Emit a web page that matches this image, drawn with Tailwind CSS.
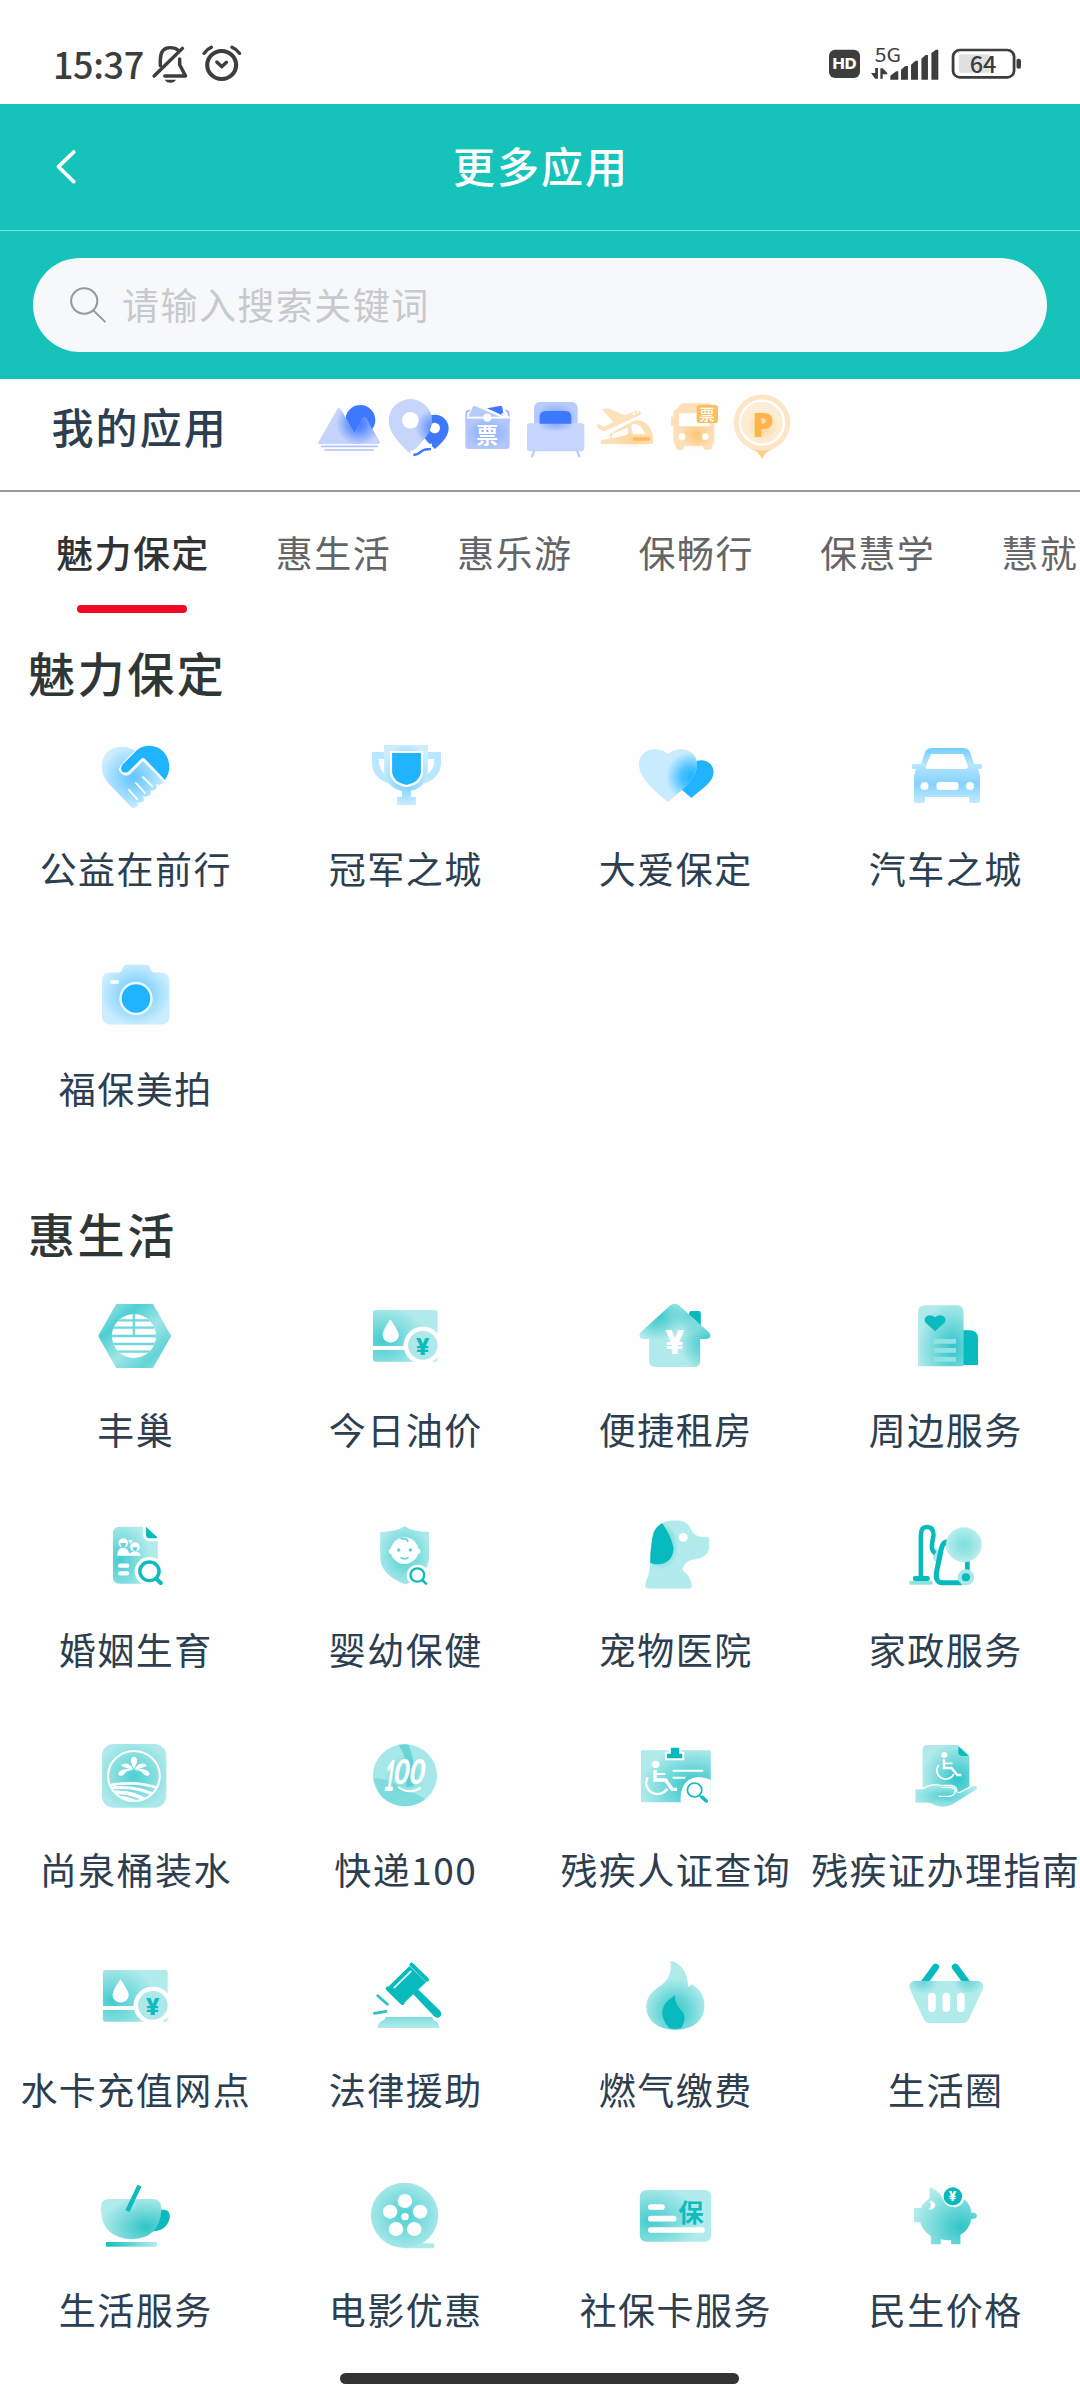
<!DOCTYPE html>
<html lang="zh-CN">
<head>
<meta charset="utf-8">
<title>更多应用</title>
<script src="https://cdn.jsdelivr.net/npm/@tailwindcss/browser@4"></script>
</head>
<body class="bg-[#fefefe]">
<!-- shared gradients and symbols -->
<svg class="absolute w-0 h-0" aria-hidden="true">
  <defs>
    <radialGradient id="tBL" cx=".15" cy=".6" r=".7"><stop offset="0" stop-color="#45cccf"/><stop offset="1" stop-color="#b2ebec"/></radialGradient>
    <radialGradient id="tC" cx=".5" cy=".5" r=".55"><stop offset="0" stop-color="#4fcfd2"/><stop offset="1" stop-color="#ade9ea"/></radialGradient>
    <radialGradient id="tBR" cx=".75" cy=".7" r=".75"><stop offset="0" stop-color="#2fc5c8"/><stop offset="1" stop-color="#b0eaeb"/></radialGradient>
    <linearGradient id="tHex" x1="0" y1="0" x2="1" y2="1"><stop offset="0" stop-color="#a5e6e8"/><stop offset=".28" stop-color="#4fcfd3"/><stop offset=".55" stop-color="#9fe5e7"/><stop offset=".8" stop-color="#62d4d7"/><stop offset="1" stop-color="#9be4e6"/></linearGradient>
    <linearGradient id="tH" x1="0" x2="1"><stop offset="0" stop-color="#16bcbe"/><stop offset="1" stop-color="#b6ecec"/></linearGradient>
    <linearGradient id="tV" x1="0" y1="0" x2="0" y2="1"><stop offset="0" stop-color="#7cdcde"/><stop offset="1" stop-color="#b6ecec"/></linearGradient>
    <radialGradient id="glowB"><stop offset="0" stop-color="#3e78ff"/><stop offset=".35" stop-color="#3e78ff" stop-opacity=".75"/><stop offset="1" stop-color="#3e78ff" stop-opacity="0"/></radialGradient>
    <radialGradient id="glowS"><stop offset="0" stop-color="#20b4ff"/><stop offset=".4" stop-color="#20b4ff" stop-opacity=".75"/><stop offset="1" stop-color="#20b4ff" stop-opacity="0"/></radialGradient>
    <radialGradient id="glowO"><stop offset="0" stop-color="#fdb64a" stop-opacity=".6"/><stop offset="1" stop-color="#fdb64a" stop-opacity="0"/></radialGradient>
    <radialGradient id="glowT"><stop offset="0" stop-color="#07babd" stop-opacity=".7"/><stop offset=".5" stop-color="#07babd" stop-opacity=".4"/><stop offset="1" stop-color="#07babd" stop-opacity="0"/></radialGradient>
    <radialGradient id="blueC" cx=".5" cy=".5" r=".52"><stop offset="0" stop-color="#62c6ff"/><stop offset=".45" stop-color="#8ed6ff"/><stop offset="1" stop-color="#cbedff"/></radialGradient>
    <linearGradient id="car" x1="0" y1="0" x2="0" y2="1"><stop offset="0" stop-color="#74cdff"/><stop offset=".3" stop-color="#b5e5ff"/><stop offset=".65" stop-color="#86d3ff"/><stop offset="1" stop-color="#c4eaff"/></linearGradient>
  </defs>
  <symbol id="watercard" viewBox="1060 288 232.3 240" preserveAspectRatio="none">
    <rect x="1083" y="330" width="188" height="155" rx="8" fill="url(#tBL)"/>
    <path d="M1134 358Q1158 395 1158 405A23 22 0 1 1 1111 405Q1111 392 1134 358Z" fill="#fff"/>
    <rect x="1081" y="438" width="100" height="12" fill="#fff"/>
    <circle cx="1228" cy="436" r="56" fill="#fff"/>
    <circle cx="1228" cy="436" r="43" fill="#aee8ea"/>
    <text x="1228" y="464" text-anchor="middle" font-size="70" font-weight="800" fill="#10bbbd" font-family="Inter">¥</text>
  </symbol>
</svg>

<main class="relative w-[1080px] h-[2400px] overflow-hidden bg-[#fefefe] font-['Noto_Sans_CJK_SC',sans-serif]">
  <!-- status bar -->
  <div class="h-[104px] flex items-start justify-between pl-[53px] pr-[58px] pt-[43px] text-[#3d3d3d]">
    <div class="flex items-start">
      <span class="w-[98px] text-[36px] leading-[40px] tracking-[-0.4px] font-medium whitespace-nowrap">15:37</span>
      <svg class="w-[38px] h-[42px]" viewBox="440 130 110 126" preserveAspectRatio="none" fill="none" stroke="#3d3d3d" stroke-width="10" stroke-linecap="round" stroke-linejoin="round"><path d="M467 198V180Q468 144 495 144Q511 144 519 152M523 178V195L540 229H480M449 229L531 146"/><path d="M480 240H512Q508 249 496 249Q484 249 480 240Z" fill="#3d3d3d" stroke="none"/></svg>
      <svg class="w-[42px] h-[42px] ml-[12px]" viewBox="583 130 122 126" preserveAspectRatio="none" fill="none" stroke="#3d3d3d" stroke-width="10" stroke-linecap="round" stroke-linejoin="round"><circle cx="643" cy="196" r="42" stroke-width="12"/><path d="M629 187L643 201L657 188M592 161Q600 149 613 143M673 143Q687 149 695 161"/></svg>
    </div>
    <div class="flex">
      <svg class="w-[31px] h-[42px]" viewBox="838 130 90 126" preserveAspectRatio="none"><rect x="838" y="150" width="90" height="85" rx="18" fill="#3d3d3d"/><text x="848" y="208" textLength="70" lengthAdjust="spacingAndGlyphs" font-size="45" font-weight="800" font-family="Inter" fill="#fff">HD</text></svg>
      <svg class="w-[69px] h-[42px] ml-[10px] overflow-visible" viewBox="958 130 200 126" preserveAspectRatio="none" fill="#3d3d3d"><text x="972" y="186" textLength="76" lengthAdjust="spacingAndGlyphs" font-size="58" font-family="Noto Sans CJK SC">5G</text><path d="M973 205h8v32h-8l-12-17h12zM988 237v-31h7l13 14v4h-13v13zM1017 240V228L1034 215H1040V240ZM1048 240V210L1060 199H1068V240ZM1077 240V195L1090 183H1097V240ZM1107 240V177L1119 166H1126V240ZM1136 240V160L1149 150H1156V240Z"/></svg>
      <svg class="w-[71px] h-[42px] ml-[12px]" viewBox="1194 130 206 126" preserveAspectRatio="none"><rect x="1217" y="164" width="89" height="55" rx="6" fill="#e0e0e0"/><rect x="1200" y="151" width="177" height="82" rx="20" fill="none" stroke="#3d3d3d" stroke-width="8"/><rect x="1384" y="177" width="13" height="30" rx="6" fill="#3d3d3d"/><text x="1287" y="219" text-anchor="middle" font-size="68" font-weight="500" font-family="Noto Sans CJK SC" fill="#3d3d3d">64</text></svg>
    </div>
  </div>

  <!-- header -->
  <header class="h-[275px] bg-[#15c3bb]">
    <div class="h-[127px] border-b border-[#7fe0dc] grid grid-cols-[1fr_auto_1fr] items-center">
      <svg class="ml-[54px] w-[26px] h-[40px]" viewBox="157 440 75 120" preserveAspectRatio="none" fill="none" stroke="#fff" stroke-width="11" stroke-linecap="round" stroke-linejoin="round"><path d="M214 455L170 499L214 544"/></svg>
      <h1 class="text-[42px] leading-[60px] tracking-[2px] font-medium text-white -mt-[5px] pl-[2px]">更多应用</h1>
    </div>
    <div class="mx-[33px] mt-[27px] h-[94px] rounded-full bg-[#f7f8fa] flex items-center pl-[35px]">
      <svg class="w-[40px] h-[40px]" viewBox="196 853 116 120" preserveAspectRatio="none" fill="none" stroke="#999" stroke-width="6" stroke-linecap="round"><circle cx="243" cy="901" r="38"/><path d="M270 930L303 963"/></svg>
      <span class="ml-[14px] -mt-[3px] text-[37px] tracking-[1.45px] leading-[50px] text-[#c8c9cc]">请输入搜索关键词</span>
    </div>
  </header>

  <!-- my apps -->
  <section class="h-[113px] border-b-2 border-[#999] flex pl-[51.5px]">
    <h2 class="w-[263.8px] pt-[17px] text-[42px] leading-[60px] tracking-[2.1px] font-medium text-[#2c3e50]">我的应用</h2>
    <div class="flex pt-[6px]">
      <svg class="w-[68.67px] h-[84px]" viewBox="46 0 206 252"><circle cx="182" cy="105" r="45" fill="#3e78ff"/><clipPath id="mt"><path d="M56 172L113 72Q118 66 123 72L164 144L190 99Q195 93 200 99L240 173Q240 177 236 177H60Q54 177 56 172Z"/></clipPath><g clip-path="url(#mt)"><rect x="50" y="60" width="200" height="120" fill="#c4d4fb"/><circle cx="176" cy="115" r="66" fill="url(#glowB)"/></g><path d="M190 99Q195 93 200 99L240 173" fill="none" stroke="#3a6ef2" stroke-opacity=".35" stroke-width="2"/><path d="M66 184H233M76 195H221" stroke="#adc3f9" stroke-width="5" stroke-linecap="round"/></svg>
      <svg class="w-[68.67px] h-[84px]" viewBox="252 0 206 252"><path d="M405 192C395 182 364 160 364 130A41 41 0 0 1 446 130C446 160 415 182 405 192Z" fill="#3e78ff"/><circle cx="404" cy="129" r="16" fill="#fff"/><clipPath id="pn"><path d="M331 206C315 190 266 150 266 107A65 65 0 0 1 396 107C396 150 347 190 331 206Z"/></clipPath><g clip-path="url(#pn)"><rect x="260" y="40" width="140" height="170" fill="#c6d6fb"/><circle cx="402" cy="128" r="56" fill="url(#glowB)" opacity=".8"/></g><circle cx="331" cy="106" r="25" fill="#fff"/><path d="M332 209Q350 212 362 200Q372 190 396 190" transform="translate(0 -9)" fill="none" stroke="#fff" stroke-width="10"/><path d="M340 210Q354 209 363 200Q371 192 393 192" fill="none" stroke="#3e78ff" stroke-width="7"/></svg>
      <svg class="w-[68.67px] h-[84px]" viewBox="458 0 206 252"><path d="M560 70L602 62Q608 62 609 92Z" fill="#3e78ff"/><path d="M502 99L517 66Q520 61 526 64L606 98Z" fill="#b7cbfb"/><path d="M498 110V86Q498 77 508 76M625 110V86Q625 77 615 76" fill="none" stroke="#9db8fa" stroke-width="5"/><path d="M495 98H628V183Q628 192 618 192H505Q495 192 495 183Z" fill="#b2c8fb"/><path d="M495 98H628V183Q628 192 618 192H505Q495 192 495 183Z" fill="url(#glowB)" opacity=".35"/><path d="M500 98H628L604 86" fill="none" stroke="#fff" stroke-width="5"/><circle cx="561" cy="98" r="12" fill="#fff"/><text x="561" y="175" text-anchor="middle" font-size="66" font-weight="700" fill="#fff">票</text></svg>
      <svg class="w-[68.67px] h-[84px]" viewBox="664 0 206 252"><rect x="703" y="51" width="131" height="90" rx="18" fill="#b8ccfb"/><ellipse cx="768" cy="98" rx="62" ry="45" fill="url(#glowB)" opacity=".5"/><path d="M682 123Q682 115 690 115H846Q854 115 854 123V189Q854 199 844 199H692Q682 199 682 189Z" fill="#c5d5fb"/><path d="M720 116V96Q720 78 738 78H797Q815 78 815 96V116Z" fill="#3e78ff"/><ellipse cx="768" cy="118" rx="55" ry="22" fill="url(#glowB)" opacity=".4"/><path d="M703 199L697 214M833 199L839 214" stroke="#b8ccfb" stroke-width="7" stroke-linecap="round"/></svg>
      <svg class="w-[68.67px] h-[84px]" viewBox="870 0 206 252"><path d="M902 177V166Q960 128 1005 106Q1034 102 1050 130Q1062 150 1060 170Q1060 177 1054 177Z" fill="#fddfb7"/><ellipse cx="1000" cy="165" rx="60" ry="25" fill="url(#glowO)" opacity=".5"/><path d="M906 166Q906 157 930 151V160ZM937 147L983 128Q988 145 978 151L935 160ZM996 118Q1022 112 1036 148H1000Q992 140 996 118Z" fill="#fff"/><path d="M906 74Q906 68 925 69L975 89L1003 77Q1022 73 1025 84Q1024 92 1010 97L912 141Q900 141 886 119L897 116L911 124L938 111Z" fill="#fde2be" stroke="#fff" stroke-width="3"/><circle cx="1002" cy="86" r="4" fill="#fff"/><circle cx="1013" cy="82" r="3" fill="#fff"/><rect x="998" y="157" width="53" height="10" rx="5" fill="#fdb95a"/></svg>
      <svg class="w-[68.67px] h-[84px]" viewBox="1076 0 206 252"><path d="M1119 80Q1122 72 1134 68Q1138 56 1150 55H1225Q1242 58 1242 75V165Q1242 176 1236 180V188Q1234 194 1226 194H1216Q1209 193 1208 182H1152Q1152 193 1144 194H1134Q1126 193 1126 182Q1119 176 1119 165V122H1112V95H1119Z" fill="#fde0b8"/><ellipse cx="1190" cy="150" rx="52" ry="44" fill="url(#glowO)"/><rect x="1136" y="84" width="92" height="40" rx="4" fill="#fff"/><circle cx="1145" cy="155" r="10" fill="#fff"/><circle cx="1215" cy="155" r="10" fill="#fff"/><rect x="1189" y="60" width="64" height="54" rx="8" fill="#fdbd60"/><text x="1220" y="104" text-anchor="middle" font-size="46" font-weight="500" fill="#fff">票</text></svg>
      <svg class="w-[68.67px] h-[84px]" viewBox="1282 0 206 252"><path d="M1387 222Q1378 198 1350 190A85 85 0 1 1 1424 190Q1396 198 1387 222Z" fill="#fde6c6"/><path d="M1387 222Q1378 198 1350 190Q1387 204 1424 190Q1396 198 1387 222Z" fill="#fdcd8a"/><circle cx="1387" cy="113" r="66" fill="#feedd5" stroke="#fff" stroke-width="7"/><ellipse cx="1390" cy="125" rx="50" ry="46" fill="url(#glowO)" opacity=".7"/><text x="1390" y="156" text-anchor="middle" font-size="102" font-weight="800" font-family="Open Sans" fill="#fdb54b">P</text></svg>
    </div>
  </section>

  <!-- category tabs -->
  <nav class="h-[150px] flex gap-[66px] pl-[56px] pt-[30px] text-[37px] leading-[60px] tracking-[1.45px] text-[#646566] whitespace-nowrap">
    <div class="flex flex-col items-center text-[#323233] font-medium"><span>魅力保定</span><i class="mt-[23px] mr-[2px] w-[110px] h-[8px] shrink-0 rounded-full bg-[#ee0a24]"></i></div>
    <span>惠生活</span><span>惠乐游</span><span>保畅行</span><span>保慧学</span><span>慧就</span>
  </nav>

  <section class="h-[561px]">
    <h2 class="h-[93px] pl-[28px] text-[47px] leading-[60px] tracking-[2.6px] font-medium text-[#2f3636]">魅力保定</h2>
    <div class="grid grid-cols-4 auto-rows-[220px] text-[37px] leading-[60px] tracking-[1.45px] text-[#2c3e50] whitespace-nowrap [&_span]:pl-[1.5px]">
      <div class="flex flex-col items-center gap-[23px]">
        <svg class="w-[80px] h-[80px]" viewBox="0 0 80 80"><path d="M37 14C27 9 12 12 8 24C4 36 10 46 18 53L36 72Q40 75 43 70L42 67Q47 69 49 65L48 61Q54 63 56 58L55 55Q61 57 62 51L61 49Q66 51 69 47L48 26L34 40Q27 42 24 35Q23 31 40 16Z" fill="url(#blueC)"/><path d="M42 15C52 7 66 11 71 20C76 29 75 38 70 45L50 24Q48 22 46 24L33 37Q27 39 26 34Q26 31 28 29Z" fill="#20b4ff"/><path d="M48 42L57 51M41 48L50 58M34 55L42 64" stroke="#fff" stroke-width="1.8" stroke-linecap="round"/></svg>
        <span>公益在前行</span></div>
      <div class="flex flex-col items-center gap-[23px]">
        <svg class="w-[80px] h-[80px]" viewBox="0 0 80 80"><path d="M21 20.500H10.500V29Q12 41 25 45M62 20.500H72.500V29Q71 41 58 45" fill="none" stroke="#b9e7ff" stroke-width="7"/><path d="M19 10H63V38Q60 53 46 56V62H51V70H32V62H37V56Q22 53 19 38Z" fill="url(#blueC)"/><path d="M26 17H57V38Q55 49 41.500 51Q28 49 26 38Z" fill="#20b4ff" stroke="#fff" stroke-width="2.200"/></svg>
        <span>冠军之城</span></div>
      <div class="flex flex-col items-center gap-[23px]">
        <svg class="w-[80px] h-[80px]" viewBox="0 0 80 80"><path d="M56.500 63C46 54 36 46 36 36C36 25 48 21 57 28C66 22 78.500 26 78.500 37C78.500 48 66 54 56.500 63Z" fill="#20b4ff"/><clipPath id="ht"><path d="M33 67C20 56 4 44 4 29C4 16 20 9 33 19C46 9 62 16 62 29C62 44 46 56 33 67Z"/></clipPath><g clip-path="url(#ht)"><rect width="80" height="80" fill="#c8ebff"/><circle cx="56" cy="42" r="25" fill="url(#glowS)"/></g></svg>
        <span>大爱保定</span></div>
      <div class="flex flex-col items-center gap-[23px]">
        <svg class="w-[80px] h-[80px]" viewBox="0 0 80 80"><path d="M9 34H8Q7 34 7 32V30Q7 29 9 29H16L20 17Q22 13 27 13H58Q63 13 65 17L69 29H76Q77 29 77 31V32Q77 34 75 34H73Q75 38 75 45V66Q75 68 73 68H66Q64 68 64 66V62H20V66Q20 68 18 68H11Q9 68 9 66V45Q9 38 11 34Z" fill="url(#car)"/><path d="M26 19H58L63 31Q63 34 60 34H23Q20 34 21 31Z" fill="#fff"/><circle cx="19.500" cy="51" r="4" fill="#fff"/><circle cx="65" cy="51" r="4" fill="#fff"/><rect x="31.500" y="47" width="22" height="8" rx="3" fill="#fff"/></svg>
        <span>汽车之城</span></div>
      <div class="flex flex-col items-center gap-[23px]">
        <svg class="w-[80px] h-[80px]" viewBox="0 0 80 80"><path d="M15 17.500H24Q27 17 28 12Q29 9.500 32 9.500H51Q54 9.500 55 12Q56 17 59 17.500H66Q74.500 18 74.500 26V61Q74.500 69.500 66 69.500H16Q7 69.500 7 61V26Q7 18 15 17.500Z" fill="url(#blueC)"/><circle cx="41" cy="43.500" r="15.500" fill="#20b4ff" stroke="#e8f8ff" stroke-width="2.500"/><rect x="15" y="25" width="9" height="4" rx="2" fill="#f4fbff"/></svg>
        <span>福保美拍</span></div>
    </div>
  </section>

  <section>
    <h2 class="h-[93px] pl-[28px] text-[47px] leading-[60px] tracking-[2.6px] font-medium text-[#2f3636]">惠生活</h2>
    <div class="grid grid-cols-4 auto-rows-[220px] text-[37px] leading-[60px] tracking-[1.45px] text-[#2c3e50] whitespace-nowrap [&_span]:pl-[1.5px]">
      <div class="flex flex-col items-center gap-[23px]">
        <svg class="w-[80px] h-[80px]" viewBox="275.9 288 232.3 240" preserveAspectRatio="none"><path d="M287 408L339 314H443L495 408L443 502H339Z" fill="url(#tHex)" stroke="url(#tHex)" stroke-width="4" stroke-linejoin="round"/><clipPath id="gl"><ellipse cx="389" cy="408" rx="64" ry="66"/></clipPath><g clip-path="url(#gl)"><rect x="320" y="340" width="140" height="140" fill="#fff"/><path d="M320 361H460M320 383H460M320 408H460M320 432H460M320 455H460M389 340V408" stroke="#6fd8da" stroke-width="7"/></g></svg>
        <span>丰巢</span></div>
      <div class="flex flex-col items-center gap-[23px]"><svg class="w-[80px] h-[80px]"><use href="#watercard"/></svg><span>今日油价</span></div>
      <div class="flex flex-col items-center gap-[23px]">
        <svg class="w-[80px] h-[80px]" viewBox="275.9 288 232.3 240" preserveAspectRatio="none"><rect x="433" y="333" width="34" height="52" rx="7" fill="#07babd"/><clipPath id="hs"><path d="M291 398Q284 416 300 417H317V484Q317 501 334 501H448Q465 501 465 484V417H484Q501 414 492 398L405 317Q391 305 377 317Z"/></clipPath><g clip-path="url(#hs)"><rect x="280" y="300" width="230" height="210" fill="#b0eaeb"/><circle cx="340" cy="345" r="75" fill="url(#glowT)"/><circle cx="490" cy="430" r="85" fill="url(#glowT)"/><circle cx="430" cy="345" r="55" fill="url(#glowT)" opacity=".6"/></g><text x="392" y="462" text-anchor="middle" font-size="98" font-weight="800" fill="#fff" font-family="Inter">¥</text></svg>
        <span>便捷租房</span></div>
      <div class="flex flex-col items-center gap-[23px]">
        <svg class="w-[80px] h-[80px]" viewBox="1060 288 232.3 240" preserveAspectRatio="none"><path d="M1228 391H1250Q1272 393 1272 415V495H1228Z" fill="#07babd"/><path d="M1098 499V336Q1098 316 1118 316H1210Q1230 316 1230 336V499Z" fill="url(#tBR)"/><path d="M1147 394L1121 369C1108 352 1130 336 1147 352C1164 336 1187 352 1174 369Z" fill="#0bbbbe"/><path d="M1144 424H1208M1144 451H1208M1144 478H1208" stroke="#92e2e4" stroke-width="14"/></svg>
        <span>周边服务</span></div>

      <div class="flex flex-col items-center gap-[23px]">
        <svg class="w-[80px] h-[80px]" viewBox="275.9 948 232.3 240" preserveAspectRatio="none"><path d="M328 1000Q328 980 348 980H415V1005Q418 1024 440 1024H458V1151H348Q328 1151 328 1131Z" fill="url(#tBL)"/><path d="M424 980L456 1011V1015H434Q424 1014 424 1005Z" fill="#07babd"/><g fill="#fff"><circle cx="358" cy="1029" r="14"/><path d="M340 1067Q341 1043 358 1043Q374 1043 376 1067Z"/><circle cx="392" cy="1041" r="14"/><path d="M372 1067Q376 1055 392 1055Q408 1055 409 1067Z"/><path d="M379 1031L373 1023Q375 1017 379 1021Q383 1017 385 1023Z"/></g><path d="M350 1029H366Q366 1043 358 1043Q350 1043 350 1029ZM385 1042H399Q399 1053 392 1053Q385 1053 385 1042Z" fill="#6ad6d9"/><path d="M349 1097H369M349 1120H369" stroke="#fff" stroke-width="13" stroke-linecap="round"/><circle cx="434" cy="1114" r="43" fill="#fefefe"/><circle cx="434" cy="1114" r="28" fill="none" stroke="#10bbbd" stroke-width="10"/><path d="M456 1138L467 1149" stroke="#10bbbd" stroke-width="12" stroke-linecap="round"/></svg>
        <span>婚姻生育</span></div>
      <div class="flex flex-col items-center gap-[23px]">
        <svg class="w-[80px] h-[80px]" viewBox="1060 948 232.3 240" preserveAspectRatio="none"><path d="M1175 979Q1200 996 1246 996V1070Q1246 1125 1178 1153Q1104 1125 1104 1070V996Q1150 996 1175 979Z" fill="url(#tC)"/><g fill="#fff"><circle cx="1175" cy="1052" r="40"/><circle cx="1138" cy="1054" r="9"/><circle cx="1212" cy="1054" r="9"/></g><g fill="none" stroke="#5bd2d5" stroke-width="5" stroke-linecap="round"><path d="M1165 1073Q1175 1080 1185 1073M1165 1016Q1185 1014 1184 1024"/></g><circle cx="1158" cy="1050" r="5" fill="#5bd2d5"/><circle cx="1192" cy="1050" r="5" fill="#5bd2d5"/><circle cx="1213" cy="1126" r="32" fill="#fefefe"/><circle cx="1212" cy="1125" r="20" fill="none" stroke="#10bbbd" stroke-width="7"/><path d="M1228 1142L1237 1151" stroke="#10bbbd" stroke-width="8" stroke-linecap="round"/></svg>
        <span>婴幼保健</span></div>
      <div class="flex flex-col items-center gap-[23px]">
        <svg class="w-[80px] h-[80px]" viewBox="275.9 948 232.3 240" preserveAspectRatio="none"><clipPath id="dg"><path d="M355 970Q370 961 395 961Q427 962 437 985Q445 1012 480 1012H491V1045Q487 1072 455 1077Q420 1080 414 1107Q418 1118 428 1124Q442 1145 441 1160Q440 1166 432 1166H315Q304 1165 306 1155Q308 1140 314 1128Q320 1110 320 1088V1060L328 1000Q335 978 355 970Z"/></clipPath><g clip-path="url(#dg)"><rect x="300" y="955" width="200" height="215" fill="#b2ebec"/><ellipse cx="352" cy="1038" rx="50" ry="72" fill="url(#glowT)"/></g><path d="M355 970Q380 1005 388 1045Q385 1092 340 1093Q330 1093 320 1088Q322 1030 330 1000Q338 978 355 970Z" fill="#07babd"/><circle cx="416" cy="1012" r="13" fill="#fff"/></svg>
        <span>宠物医院</span></div>
      <div class="flex flex-col items-center gap-[23px]">
        <svg class="w-[80px] h-[80px]" viewBox="1060 948 232.3 240" preserveAspectRatio="none"><ellipse cx="1149" cy="1064" rx="8" ry="20" fill="#aee9ea"/><path d="M1106 1130V1005Q1106 981 1124 981Q1143 981 1143 1005Q1138 1030 1138 1043Q1139 1055 1148 1060" fill="none" stroke="#07babd" stroke-width="13"/><rect x="1083" y="1128" width="49" height="15" rx="6" fill="#07babd"/><rect x="1073" y="1143" width="67" height="11" fill="#8fe1e3"/><rect x="1234" y="1084" width="14" height="26" fill="#07babd"/><path d="M1190 1024Q1169 1024 1165 1048L1151 1120Q1149 1147 1166 1148H1225" fill="none" stroke="#07babd" stroke-width="15"/><circle cx="1231" cy="1034" r="52" fill="#b8eeee"/><circle cx="1231" cy="1034" r="52" fill="url(#glowT)" opacity=".45"/><circle cx="1237" cy="1132" r="24" fill="#a8e8e9"/><circle cx="1237" cy="1132" r="12" fill="#07babd"/></svg>
        <span>家政服务</span></div>

      <div class="flex flex-col items-center gap-[23px]">
        <svg class="w-[80px] h-[80px]" viewBox="275.9 108 232.3 240" preserveAspectRatio="none"><rect x="296" y="132" width="187" height="191" rx="35" fill="url(#tC)"/><circle cx="389" cy="228" r="75" fill="none" stroke="#fff" stroke-width="6"/><g fill="#fff"><path d="M389 208Q378 186 380 180Q381 171 389 170Q397 171 398 180Q400 186 389 208Z"/><path d="M386 210Q370 206 351 197Q360 187 374 193Q383 198 386 210ZM392 210Q408 206 427 197Q418 187 404 193Q395 198 392 210ZM384 211Q368 211 359 224Q350 230 344 225Q342 215 354 210Q368 204 384 211ZM394 211Q410 211 419 224Q428 230 434 225Q436 215 424 210Q410 204 394 211Z"/></g><clipPath id="wt"><circle cx="389" cy="228" r="74"/></clipPath><g clip-path="url(#wt)" fill="none" stroke="#fff"><path d="M310 258Q390 238 470 268" stroke-width="8"/><path d="M310 266Q390 252 460 290" stroke-width="9"/><path d="M310 280Q375 268 430 304" stroke-width="11"/><path d="M320 294Q365 286 400 308" stroke-width="8"/></g></svg>
        <span>尚泉桶装水</span></div>
      <div class="flex flex-col items-center gap-[23px]">
        <svg class="w-[80px] h-[80px]" viewBox="1060 108 232.3 240" preserveAspectRatio="none"><clipPath id="hd"><circle cx="1176" cy="226" r="93"/></clipPath><g clip-path="url(#hd)"><rect x="1080" y="130" width="195" height="195" fill="#a6e7e9"/><path d="M1155 130Q1190 180 1180 260H1200Q1210 190 1185 130Z" fill="#4ecfd2" opacity=".7"/><path d="M1083 235Q1130 232 1160 265L1176 270Q1225 285 1250 310L1176 325L1110 300Z" fill="#4ecfd2" opacity=".45"/><circle cx="1176" cy="226" r="60" fill="url(#glowT)" opacity=".45"/></g><text transform="translate(1111 272) skewX(-8)" textLength="32" lengthAdjust="spacingAndGlyphs" font-size="128" font-weight="900" font-family="Lato" fill="#fff">1</text><text transform="translate(1140 252) skewX(-10)" textLength="90" lengthAdjust="spacingAndGlyphs" font-size="102" font-weight="900" font-family="Lato" fill="#fff">00</text><path d="M1156 261Q1190 286 1222 263" fill="none" stroke="#fff" stroke-width="6"/></svg>
        <span>快递100</span></div>
      <div class="flex flex-col items-center gap-[23px]">
        <svg class="w-[80px] h-[80px]" viewBox="275.9 108 232.3 240" preserveAspectRatio="none"><rect x="293" y="151" width="203" height="156" rx="4" fill="url(#tBR)"/><path d="M380 143H404V161H413V175H369V161H380Z" fill="#07babd" stroke="#fff" stroke-width="12" paint-order="stroke"/><circle cx="336" cy="193" r="11" fill="#fff"/><g fill="none" stroke="#fff"><path d="M334 210V240H365L384 268H398" stroke-width="10"/><path d="M337 222H364M385 212H474M385 233H422" stroke-width="6"/><path d="M313 232A32 32 0 1 0 370 266" stroke-width="7"/></g><path d="M496 240V312H409Q403 240 455 231Q478 231 496 240Z" fill="#fefefe"/><circle cx="449" cy="270" r="21" fill="none" stroke="#10bbbd" stroke-width="5"/><path d="M464 287L470 293" stroke="#10bbbd" stroke-width="5"/><path d="M471 292L483 303" stroke="#10bbbd" stroke-width="10" stroke-linecap="round"/></svg>
        <span>残疾人证查询</span></div>
      <div class="flex flex-col items-center gap-[23px]">
        <svg class="w-[80px] h-[80px]" viewBox="1060 108 232.3 240" preserveAspectRatio="none"><path d="M1111 150Q1111 135 1126 135H1213L1243 162Q1247 166 1247 172V262L1215 280L1165 256L1111 262Z" fill="url(#tBR)"/><path d="M1215 139V160Q1217 168 1225 168H1244Z" fill="#07babd"/><circle cx="1174" cy="165" r="9" fill="#fff"/><g fill="none" stroke="#fff"><path d="M1173 178V204H1195L1212 225H1224" stroke-width="7"/><path d="M1175 190H1198" stroke-width="5"/><path d="M1158 195A26 26 0 1 0 1202 222" stroke-width="5"/></g><path d="M1090 268H1112Q1140 250 1165 258H1195Q1212 262 1208 276L1218 280L1256 259Q1272 255 1268 268L1195 315Q1175 324 1150 317Q1130 305 1115 308H1090Z" fill="url(#tC)" stroke="#fff" stroke-width="7" paint-order="stroke"/><path d="M1158 289H1190Q1207 285 1206 272Q1204 262 1190 262H1165" fill="none" stroke="#fff" stroke-width="4"/></svg>
        <span>残疾证办理指南</span></div>

      <div class="flex flex-col items-center gap-[23px]"><svg class="w-[80px] h-[80px]"><use href="#watercard"/></svg><span>水卡充值网点</span></div>
      <div class="flex flex-col items-center gap-[23px]">
        <svg class="w-[80px] h-[80px]" viewBox="1060 768 232.3 240" preserveAspectRatio="none"><path d="M1120 951H1255Q1256 960 1264 963Q1275 968 1276 984H1096Q1098 968 1110 962Q1119 960 1120 951Z" fill="url(#tV)"/><g fill="#07babd"><path d="M1189 798L1238 846L1174 908L1127 861Z"/><path d="M1196 878L1211 865L1278 932Q1286 944 1276 952Q1268 956 1260 948Z"/></g><path d="M1195 794L1240 839M1126 866L1169 909" stroke="#07babd" stroke-width="12" stroke-linecap="round"/><path d="M1145 863L1193 814" stroke="#e6f8f8" stroke-width="5" stroke-linecap="round"/><path d="M1097 887L1125 913M1087 940L1121 934" stroke="#2cc3c5" stroke-width="8" stroke-linecap="round"/></svg>
        <span>法律援助</span></div>
      <div class="flex flex-col items-center gap-[23px]">
        <svg class="w-[80px] h-[80px]" viewBox="275.9 768 232.3 240" preserveAspectRatio="none"><clipPath id="fl"><path d="M379 782Q428 795 430 860Q437 860 440 852Q478 875 478 918Q474 986 393 990Q312 985 308 920Q308 885 345 860Q386 835 379 782Z"/></clipPath><g clip-path="url(#fl)"><rect x="300" y="775" width="190" height="220" fill="#b0eaeb"/><ellipse cx="392" cy="935" rx="92" ry="100" fill="url(#glowT)"/></g><path d="M392 886Q390 912 416 938Q426 955 410 985Q393 988 376 985Q358 965 355 942Q354 908 392 886Z" fill="#07babd"/></svg>
        <span>燃气缴费</span></div>
      <div class="flex flex-col items-center gap-[23px]">
        <svg class="w-[80px] h-[80px]" viewBox="1060 768 232.3 240" preserveAspectRatio="none"><path d="M1149 801L1113 852M1206 801L1242 852" stroke="#07babd" stroke-width="20" stroke-linecap="round"/><clipPath id="bk"><path d="M1087 842H1273Q1292 848 1286 868L1245 958Q1240 970 1228 970H1132Q1120 970 1115 958L1074 868Q1068 848 1087 842Z"/></clipPath><g clip-path="url(#bk)"><rect x="1060" y="840" width="240" height="140" fill="#b2ebec"/><ellipse cx="1112" cy="842" rx="45" ry="40" fill="url(#glowT)" opacity=".65"/><ellipse cx="1244" cy="842" rx="45" ry="40" fill="url(#glowT)" opacity=".65"/></g><g fill="#fff"><rect x="1127" y="878" width="22" height="58" rx="11"/><rect x="1169" y="878" width="22" height="58" rx="11"/><rect x="1211" y="878" width="22" height="58" rx="11"/></g></svg>
        <span>生活圈</span></div>

      <div class="flex flex-col items-center gap-[23px]">
        <svg class="w-[80px] h-[80px]" viewBox="275.9 228 232.3 240" preserveAspectRatio="none"><path d="M465 329H478Q495 331 493 354Q484 392 444 394Z" fill="#07babd"/><path d="M293 320Q295 297 317 297H445Q469 299 469 325Q466 416 382 418Q295 412 293 330Z" fill="url(#tBR)"/><path d="M370 333L405 257" stroke="#0cbbbe" stroke-width="13"/><rect x="308" y="426" width="148" height="14" fill="url(#tH)"/></svg>
        <span>生活服务</span></div>
      <div class="flex flex-col items-center gap-[23px]">
        <svg class="w-[80px] h-[80px]" viewBox="1060 228 232.3 240" preserveAspectRatio="none"><path d="M1175 445H1257A8 8 0 0 0 1257 430H1228L1175 400Z" fill="#aeeaeb"/><circle cx="1175" cy="346" r="98" fill="url(#tC)"/><g fill="#fff"><circle cx="1176" cy="303" r="21"/><circle cx="1133" cy="335" r="21"/><circle cx="1220" cy="335" r="21"/><circle cx="1150" cy="387" r="21"/><circle cx="1203" cy="387" r="21"/><circle cx="1176" cy="350" r="11"/></g></svg>
        <span>电影优惠</span></div>
      <div class="flex flex-col items-center gap-[23px]">
        <svg class="w-[80px] h-[80px]" viewBox="275.9 228 232.3 240" preserveAspectRatio="none"><rect x="290" y="270" width="207" height="155" rx="18" fill="url(#tBL)"/><path d="M322 321H354M322 356H388M322 390H470" stroke="#fff" stroke-width="17" stroke-linecap="round"/><text x="439" y="365" text-anchor="middle" font-size="74" font-weight="700" fill="#10bbbd">保</text></svg>
        <span>社保卡服务</span></div>
      <div class="flex flex-col items-center gap-[23px]">
        <svg class="w-[80px] h-[80px]" viewBox="1060 228 232.3 240" preserveAspectRatio="none"><path d="M1132 262Q1155 268 1170 296Q1175 320 1205 322Q1226 318 1232 298Q1250 312 1253 338H1262Q1269 341 1269 347Q1269 354 1262 356H1253Q1248 388 1221 405V433H1194V420Q1180 422 1164 418V433H1135V408Q1110 392 1104 367H1086V324H1106Q1112 308 1131 296Z" fill="url(#tBR)"/><path d="M1132 304Q1146 304 1147 316Q1146 328 1130 328Q1140 318 1132 304Z" fill="#fff" stroke="#fff" stroke-width="2"/><circle cx="1199" cy="289" r="27" fill="#07babd"/><text x="1199" y="303" text-anchor="middle" font-size="38" font-weight="800" fill="#fff" font-family="Inter">¥</text></svg>
        <span>民生价格</span></div>
    </div>
  </section>

  <!-- system home indicator -->
  <div class="absolute left-[340px] top-[2373px] w-[399px] h-[11px] rounded-full bg-[#333]"></div>
</main>
</body>
</html>
